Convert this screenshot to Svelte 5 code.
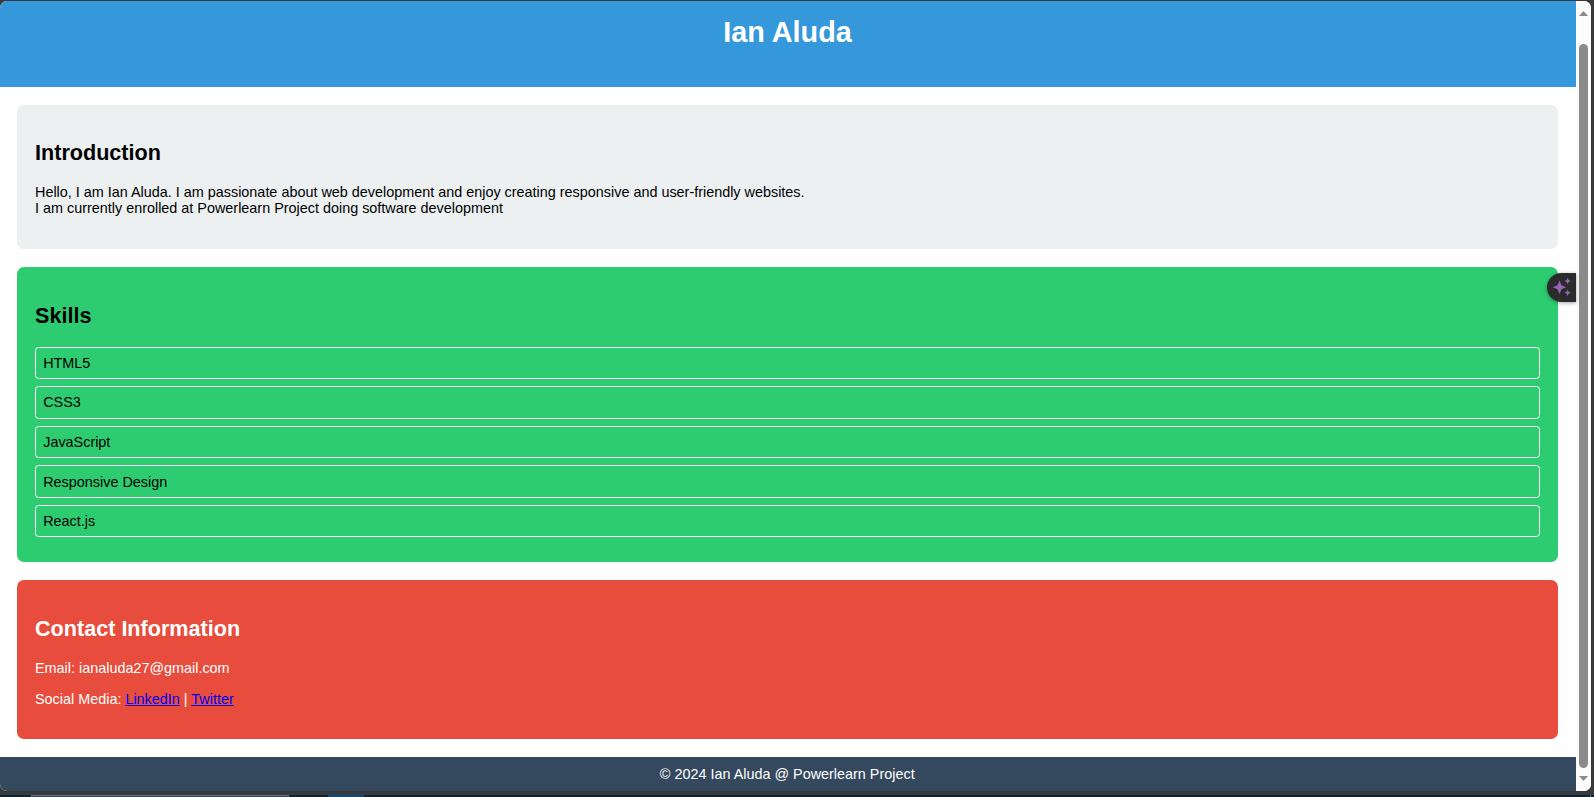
<script>
  const skills = ['HTML5', 'CSS3', 'JavaScript', 'Responsive Design', 'React.js'];
</script>

<div class="desktop">
  <div class="window">
    <div class="page">
      <header><h1>Ian Aluda</h1></header>
      <main>
        <section class="intro">
          <h2>Introduction</h2>
          <p>
            Hello, I am Ian Aluda. I am passionate about web development and enjoy creating responsive and user-friendly websites.<br />
            I am currently enrolled at Powerlearn Project doing software development
          </p>
        </section>
        <section class="skills">
          <h2>Skills</h2>
          <ul>
            {#each skills as skill}
              <li>{skill}</li>
            {/each}
          </ul>
        </section>
        <section class="contact">
          <h2>Contact Information</h2>
          <p>Email: ianaluda27@gmail.com</p>
          <p>Social Media: <a href="#linkedin">LinkedIn</a> | <a href="#twitter">Twitter</a></p>
        </section>
      </main>
      <footer>© 2024 Ian Aluda @ Powerlearn Project</footer>
      <button class="assistant" aria-label="Assistant">
        <svg width="20" height="20" viewBox="0 0 20 20" fill="#9566b8">
          <path d="M7.5 3.4 L9.5 8.2 L14.2 10.2 L9.5 12.2 L7.5 17 L5.5 12.2 L.8 10.2 L5.5 8.2Z" />
          <path d="M15.6 .8 L16.6 3 L18.8 4 L16.6 5 L15.6 7.2 L14.6 5 L12.4 4 L14.6 3Z" />
          <path d="M15.6 12.6 L16.6 14.8 L18.8 15.8 L16.6 16.8 L15.6 19 L14.6 16.8 L12.4 15.8 L14.6 14.8Z" />
        </svg>
      </button>
    </div>
    <div class="scrollbar">
      <svg width="9" height="5" viewBox="0 0 9 5"><path d="M4.5 0 L9 5 H0Z" fill="#8b8b8b" /></svg>
      <div class="thumb"></div>
      <svg width="9" height="5" viewBox="0 0 9 5"><path d="M0 0 H9 L4.5 5Z" fill="#8b8b8b" /></svg>
    </div>
  </div>
  <div class="taskbar">
    <div class="search"></div>
    <div class="task"></div>
    <div class="tray"></div>
  </div>
</div>

<style>
  :global(body) {
    margin: 0;
    overflow: hidden;
  }
  .desktop {
    box-sizing: border-box;
    width: 1594px;
    height: 797px;
    padding-top: 1px;
    background: #3b3b3b;
    font: 14.4px/16px 'Liberation Sans', Arial, sans-serif;
    color: #000;
    display: flex;
    flex-direction: column;
  }
  .window {
    display: flex;
    width: 1591px;
    height: 790px;
    border-radius: 7px;
    overflow: hidden;
    background: #fff;
    box-shadow: 0 0 2px #303030;
  }
  .page {
    position: relative;
    width: 1576px;
    display: flex;
    flex-direction: column;
  }
  header {
    box-sizing: border-box;
    height: 86px;
    padding-top: 15px;
    background: #3498db;
    color: #fff;
    text-align: center;
  }
  h1 {
    margin: 0 1px 0 0;
    font-size: 28.8px;
    line-height: 33px;
  }
  main {
    height: 670px;
    box-sizing: border-box;
    padding: 18px 18px 18px 17px;
    display: flex;
    flex-direction: column;
    gap: 18px;
  }
  section {
    box-sizing: border-box;
    padding: 36px 18px 0;
    border-radius: 7px;
  }
  .intro {
    height: 144px;
    padding-top: 35px;
    background: #ecf0f1;
  }
  .skills {
    height: 295px;
    background: #2ecc71;
  }
  .contact {
    height: 159px;
    background: #e74c3c;
    color: #fff;
  }
  h2 {
    margin: 0 0 19px;
    font-size: 21.6px;
    line-height: 25px;
  }
  .skills h2 {
    margin-bottom: 18.6px;
  }
  p {
    margin: 0 0 15px;
  }
  ul {
    list-style: none;
    margin: 0;
    padding: 0;
    display: flex;
    flex-direction: column;
    gap: 7.2px;
  }
  li {
    box-sizing: border-box;
    height: 32.4px;
    padding: 7.2px;
    border: 1px solid #fff;
    border-radius: 3.6px;
  }
  a {
    color: #0000ee;
  }
  footer {
    flex: 1;
    padding: 9px 1.5px 0 0;
    background: #34495e;
    color: #fff;
    text-align: center;
  }
  .assistant {
    position: absolute;
    right: 0;
    top: 272px;
    width: 29px;
    height: 29px;
    padding: 0 0 1px 5px;
    border: 0;
    border-radius: 15px 0 0 15px;
    background: #2b2b2b;
    box-shadow: 0 1px 4px rgba(0, 0, 0, 0.35);
    display: flex;
    align-items: center;
  }
  .scrollbar {
    box-sizing: border-box;
    width: 15px;
    padding: 10px 0 10px;
    background: #fcfcfc;
    display: flex;
    flex-direction: column;
    align-items: center;
  }
  .thumb {
    width: 9px;
    flex: 1;
    margin: 28px 0 8px;
    border-radius: 5px;
    background: #8b8b8b;
  }
  .taskbar {
    height: 2px;
    margin-top: 4px;
    background: #0b2239;
    display: flex;
  }
  .search {
    box-sizing: border-box;
    width: 258px;
    margin-left: 31px;
    border: 1px solid #5d6f80;
    border-bottom: 0;
    background: #34495e;
  }
  .task {
    width: 36px;
    margin-left: 39px;
    background: #0a4a85;
  }
  .tray {
    width: 1px;
    margin-left: 1226px;
    background: #6f7f8c;
  }
</style>
